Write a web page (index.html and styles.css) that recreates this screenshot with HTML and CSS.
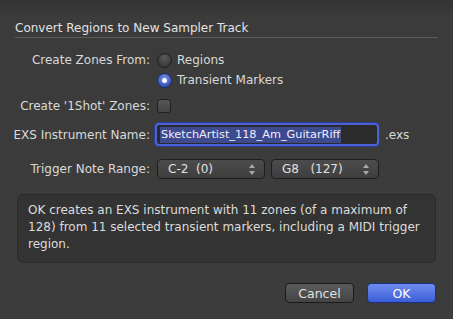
FILE: index.html
```html
<!DOCTYPE html>
<html lang="en">
<head>
    <meta charset="UTF-8">
    <title>Convert Regions to New Sampler Track</title>
    <link rel="stylesheet" href="styles.css">
</head>
<body>
    <div class="dialog">
        <div class="title">Convert Regions to New Sampler Track</div>

        <div class="form">
            <div class="row row-zones">
                <div class="label">Create Zones From:</div>
                <div class="radios">
                    <div class="radio-line"><span class="radio"></span>Regions</div>
                    <div class="radio-line"><span class="radio on"></span>Transient Markers</div>
                </div>
            </div>

            <div class="row row-check">
                <div class="label">Create '1Shot' Zones:</div>
                <span class="checkbox"></span>
            </div>

            <div class="row row-name">
                <div class="label">EXS Instrument Name:</div>
                <div class="field"><span class="sel">SketchArtist_118_Am_GuitarRiff</span></div>
                <span class="ext">.exs</span>
            </div>

            <div class="row row-range">
                <div class="label">Trigger Note Range:</div>
                <div class="popup">C-2&nbsp; (0)<span class="arrows"></span></div>
                <div class="popup second">G8 &nbsp; (127)<span class="arrows"></span></div>
            </div>
        </div>

        <div class="info">OK creates an EXS instrument with 11 zones (of a maximum of 128) from 11 selected transient markers, including a MIDI trigger region.</div>

        <div class="buttons">
            <button class="btn">Cancel</button>
            <button class="btn ok">OK</button>
        </div>
    </div>
</body>
</html>
```

FILE: styles.css
```css
html, body { margin: 0; height: 100%; }
body {
    background: linear-gradient(#333 0px, #3b3b3b 18px, #3c3c3c 100%);
    font-family: "DejaVu Sans", Verdana, sans-serif;
    font-size: 12px;
    color: #d9d9d9;
}
.dialog { padding: 20px 15px 0 15px; }
.title { color: #e2e2e2; font-size: 12px; line-height: 16px; padding-bottom: 1px; border-bottom: 1px solid #5c5c5c; }

.form { margin-top: 14px; margin-left: -10px; }
.row { display: flex; align-items: center; }
.label { width: 145px; text-align: right; margin-right: 7px; flex: none; white-space: nowrap; }

.row-zones { align-items: flex-start; }
.row-zones .label { line-height: 16px; }
.radios { display: flex; flex-direction: column; gap: 4px; }
.radio-line { display: flex; align-items: center; height: 16px; }
.radio {
    width: 13px; height: 13px; border-radius: 50%;
    border: 1px solid #1f1f1f;
    background: radial-gradient(circle at 50% 30%, #5a5a5a, #3a3a3a 70%);
    margin-right: 5px; position: relative;
}
.radio.on { background: radial-gradient(circle at 50% 35%, #7c95e8, #3550b8 75%); border-color: #1c2a6e; }
.radio.on::after {
    content: ""; position: absolute; left: 4px; top: 4px; width: 5px; height: 5px;
    border-radius: 50%; background: #fff;
}

.row-check { margin-top: 11px; }
.checkbox {
    width: 12px; height: 12px; border-radius: 3px; border: 1px solid #1f1f1f;
    background: linear-gradient(#555, #444);
}

.row-name { margin-top: 10px; }
.row-name .label { margin-right: 5px; }
.field {
    width: 217px; height: 19px; padding-left: 3px;
    border: 2px solid #4a62d6; border-radius: 4px;
    box-shadow: 0 0 0 1px #2f3f8f;
    background: #2b2b2b;
    display: flex; align-items: center;
}
.sel { background: #3e4a8e; color: #eef; font-size: 11.3px; line-height: 16px; padding: 0 1px; }
.ext { margin-left: 6px; }

.row-range { margin-top: 13px; }
.popup {
    position: relative; width: 96px; height: 18px; padding-left: 10px;
    border: 1px solid #1e1e1e; border-radius: 4px;
    background: linear-gradient(#4c4c4c, #3e3e3e);
    line-height: 18px; color: #e0e0e0;
}
.popup.second { margin-left: 6px; }
.arrows::before, .arrows::after {
    content: ""; position: absolute; right: 9px; border-left: 3px solid transparent; border-right: 3px solid transparent;
}
.arrows::before { top: 4px; border-bottom: 4px solid #a8a8a8; }
.arrows::after { top: 11px; border-top: 4px solid #a8a8a8; }

.info {
    margin: 15px 2px 0 2px; padding: 7px 10px 9px 10px;
    background: #333; border: 1px solid #2a2a2a; border-radius: 6px;
    line-height: 17px; color: #dcdcdc; font-size: 12px;
}

.buttons { display: flex; justify-content: flex-end; gap: 13px; margin-top: 20px; margin-right: 2px; }
.btn {
    width: 69px; height: 20px; padding: 0; border-radius: 4px;
    border: 1px solid #1a1a1a; font-family: inherit; font-size: 12.5px;
    background: linear-gradient(#5a5a5a, #444); color: #e0e0e0;
}
.btn.ok { background: linear-gradient(#6e8cf0, #3a5ed6); border-color: #1d307c; color: #fff; }
```
